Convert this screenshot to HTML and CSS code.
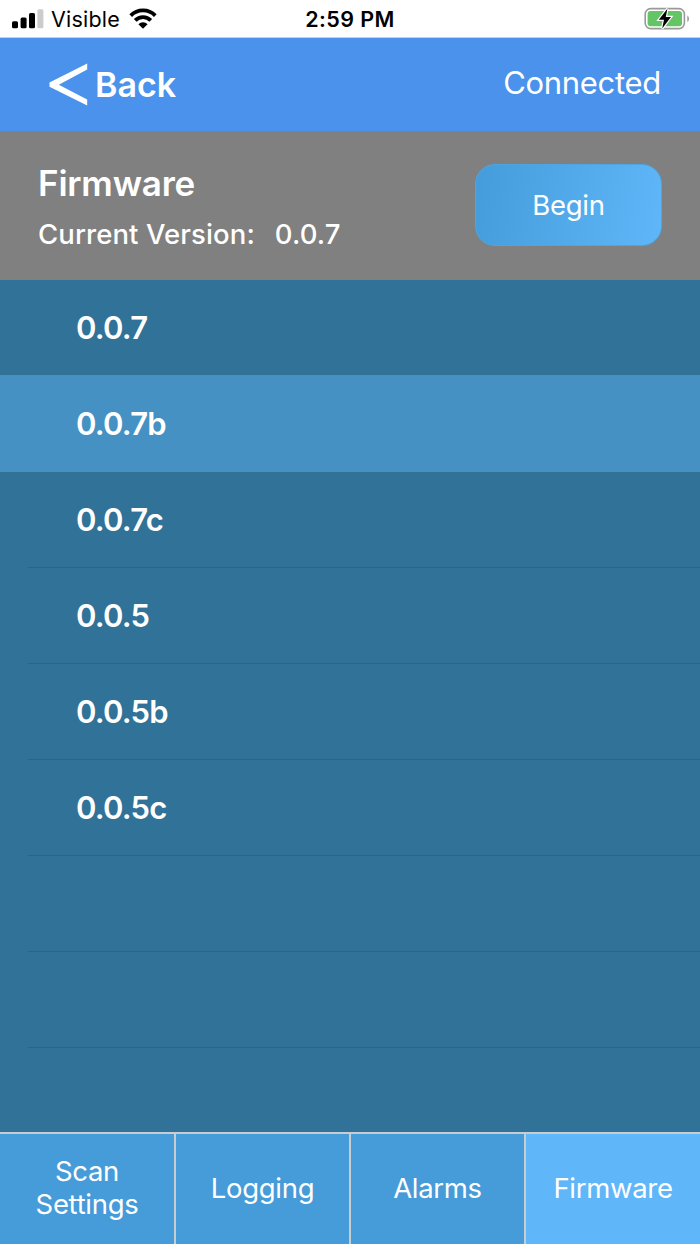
FILE: index.html
```html
<!DOCTYPE html>
<html lang="en">
<head>
    <meta charset="UTF-8">
    <meta name="viewport" content="width=device-width, initial-scale=1.0">
    <title>Firmware</title>
    <link rel="stylesheet" href="styles.css">
</head>
<body>
    <div class="status-bar">
        <div class="carrier">
            <svg class="signal" width="32" height="20" viewBox="0 0 32 20">
                <rect x="0" y="12.3" width="6" height="7" rx="1.5"/>
                <rect x="8.6" y="8.6" width="6" height="10.7" rx="1.5"/>
                <rect x="17" y="3.9" width="6" height="15.4" rx="1.5"/>
                <rect class="off" x="25.4" y="0.3" width="6" height="19" rx="1.5"/>
            </svg>
            <span class="carrier-name">Visible</span>
            <svg class="wifi" width="28" height="21" viewBox="0 0 28 21">
                <path class="arc" d="M1.7 7.6 A17.3 17.3 0 0 1 26.3 7.6"/>
                <path class="arc" d="M6.2 12.4 A11 11 0 0 1 21.8 12.4"/>
                <path d="M14 20.8 L9.4 16.3 A6.4 6.4 0 0 1 18.6 16.3 Z"/>
            </svg>
        </div>
        <span class="time">2:59 PM</span>
        <svg class="battery" width="46" height="24" viewBox="0 0 46 24">
            <rect class="shell" x="1.2" y="1.6" width="39.2" height="20" rx="5.5"/>
            <path class="cap" d="M43.3 8.4 Q45 9.3 45 11.7 Q45 14.1 43.3 15 Z"/>
            <rect class="charge" x="3.6" y="4" width="34.4" height="15.2" rx="3"/>
            <path class="bolt" d="M23.4 1.8 L14.8 12.8 H20 L18.2 21.6 L27 10 H21.8 Z"/>
        </svg>
    </div>
    <header>
        <a class="back" href="#">
            <svg width="40" height="44" viewBox="0 0 40 44">
                <path d="M38.2 1.6 L0.5 20.6 V24.8 L38.2 43.6 V37.6 L9.8 22.7 L38.2 7.6 Z"/>
            </svg>
            <span>Back</span>
        </a>
        <span class="connection">Connected</span>
    </header>
    <section class="firmware">
        <div class="info">
            <h1>Firmware</h1>
            <p><span class="label">Current Version:</span><span class="version">0.0.7</span></p>
        </div>
        <button class="begin">Begin</button>
    </section>
    <ul class="versions">
        <li>0.0.7</li>
        <li class="selected">0.0.7b</li>
        <li>0.0.7c</li>
        <li>0.0.5</li>
        <li>0.0.5b</li>
        <li>0.0.5c</li>
        <li></li>
        <li></li>
        <li></li>
    </ul>
    <nav class="tabs">
        <a class="scan" href="#">Scan<br>Settings</a>
        <a class="logging" href="#">Logging</a>
        <a class="alarms" href="#">Alarms</a>
        <a class="active" href="#">Firmware</a>
    </nav>
</body>
</html>
```

FILE: styles.css
```css
* {
    box-sizing: border-box;
}
body {
    font-family: Inter, "Liberation Sans", sans-serif;
    margin: 0;
    height: 1244px;
    display: flex;
    flex-direction: column;
    background-color: #307298;
    color: #fff;
    overflow: hidden;
}
a {
    color: #fff;
    text-decoration: none;
}
.status-bar {
    display: grid;
    grid-template-columns: 1fr auto 1fr;
    align-items: center;
    height: 38px;
    padding: 0 10px 0 12px;
    background-color: #fff;
    border-bottom: 1px solid #b9d3f6;
    color: #000;
}
.carrier {
    display: flex;
    align-items: center;
}
.signal {
    margin-right: 7px;
}
.signal .off {
    fill: #ccc;
}
.carrier-name {
    font-size: 21.5px;
    letter-spacing: 0.2px;
}
.wifi {
    margin-left: 9px;
}
.wifi .arc {
    fill: none;
    stroke: #000;
    stroke-width: 3.8;
}
.time {
    font-size: 21.5px;
    font-weight: 600;
    letter-spacing: 0.4px;
    margin-right: 2px;
}
.battery {
    justify-self: end;
}
.battery .shell {
    fill: none;
    stroke: #999;
    stroke-width: 1.6;
}
.battery .cap {
    fill: #999;
}
.battery .charge {
    fill: #65c466;
}
.battery .bolt {
    fill: #000;
    stroke: #fff;
    stroke-width: 2.4;
    paint-order: stroke;
}
header {
    display: flex;
    justify-content: space-between;
    align-items: center;
    height: 93px;
    padding: 0 39px 0 49px;
    background-color: #4a92ec;
}
.back {
    display: flex;
    align-items: center;
    font-size: 34px;
    font-weight: 600;
}
.back svg {
    fill: #fff;
    margin: 0 6px 2px 0;
}
.connection {
    font-size: 31px;
    font-weight: 400;
    letter-spacing: -0.3px;
    padding-bottom: 5px;
}
.firmware {
    display: flex;
    justify-content: space-between;
    height: 149px;
    padding: 33px 38px 0;
    background-color: #808080;
}
.firmware h1 {
    margin: 0;
    font-size: 35px;
    font-weight: 600;
    letter-spacing: -0.2px;
    line-height: 38px;
}
.firmware p {
    margin: 14px 0 0;
    font-size: 27.5px;
    font-weight: 500;
    letter-spacing: 0.1px;
    line-height: 36px;
}
.version {
    margin-left: 20px;
}
.begin {
    width: 187px;
    height: 82px;
    padding: 0;
    border: 1px solid #4fa5e2;
    border-radius: 20px;
    background: linear-gradient(100deg, #459cda, #5fb7f9);
    color: #fff;
    font-family: inherit;
    font-size: 27.5px;
    font-weight: 400;
    letter-spacing: -0.3px;
}
.versions {
    flex: 1;
    margin: 0;
    padding: 0;
    list-style: none;
    overflow: hidden;
}
.versions li {
    height: 96px;
    margin-left: 28px;
    padding-left: 48px;
    border-bottom: 1px solid #2b6688;
    font-size: 31px;
    font-weight: 600;
    letter-spacing: -0.8px;
    line-height: 96px;
}
.versions li:first-child {
    height: 95px;
    border-bottom: none;
}
.versions .selected {
    height: 97px;
    margin-left: 0;
    padding-left: 76px;
    background-color: #4591c4;
    border-bottom: none;
    line-height: 98px;
}
.tabs {
    display: grid;
    grid-template-columns: 176px 175px 175px 1fr;
    height: 112px;
    border-top: 2px solid #c8cdd1;
    background-color: #469bd9;
}
.tabs a {
    display: flex;
    align-items: center;
    justify-content: center;
    padding-bottom: 2px;
    border-right: 2px solid #c8cdd1;
    font-size: 27.5px;
    font-weight: 400;
    letter-spacing: -0.3px;
    line-height: 33px;
    text-align: center;
}
.tabs .active {
    background-color: #5fb7f9;
    border-right: none;
}
```
